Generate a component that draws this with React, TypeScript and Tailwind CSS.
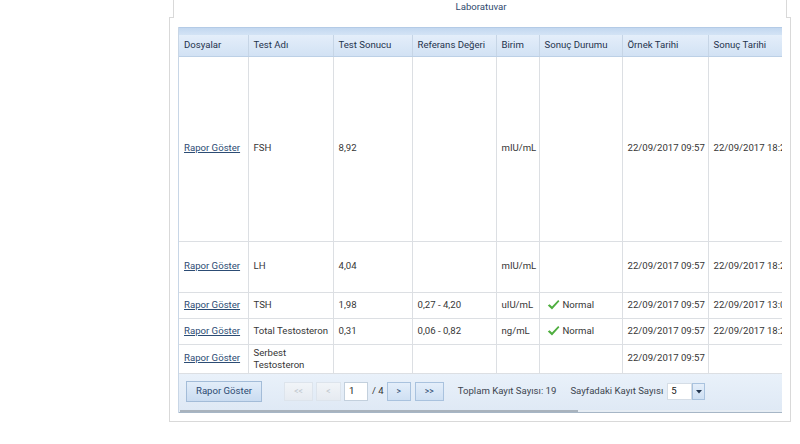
import React from "react";

const cols = [69, 85, 79, 84, 43, 83, 86, 92];
const headers = ["Dosyalar", "Test Adı", "Test Sonucu", "Referans Değeri", "Birim", "Sonuç Durumu", "Örnek Tarihi", "Sonuç Tarihi"];

type Row = { h: number; name: React.ReactNode; val: string; ref: string; unit: string; ok: boolean; o: string; s: string };
const rows: Row[] = [
  { h: 185, name: "FSH", val: "8,92", ref: "", unit: "mIU/mL", ok: false, o: "22/09/2017 09:57", s: "22/09/2017 18:25" },
  { h: 51, name: "LH", val: "4,04", ref: "", unit: "mIU/mL", ok: false, o: "22/09/2017 09:57", s: "22/09/2017 18:25" },
  { h: 26, name: "TSH", val: "1,98", ref: "0,27 - 4,20", unit: "uIU/mL", ok: true, o: "22/09/2017 09:57", s: "22/09/2017 13:05" },
  { h: 26, name: "Total Testosteron", val: "0,31", ref: "0,06 - 0,82", unit: "ng/mL", ok: true, o: "22/09/2017 09:57", s: "22/09/2017 18:25" },
  { h: 29, name: <span className="block leading-[12px]">Serbest<br />Testosteron</span>, val: "", ref: "", unit: "", ok: false, o: "22/09/2017 09:57", s: "" },
];

function Check() {
  return (
    <svg width="13" height="12" viewBox="0 0 13 12" className="shrink-0">
      <path d="M0.8 6.6 L2.6 5.2 L5 7.6 L11.2 1 L12.4 2.2 L5 10.6 Z" fill="#4fae3f" />
    </svg>
  );
}

function NavBtn({ label, enabled, w }: { label: string; enabled: boolean; w: number }) {
  return (
    <div
      style={{ width: w }}
      className={
        "h-[19px] flex items-center justify-center text-[8.5px] border " +
        (enabled
          ? "border-[#a9c2de] bg-gradient-to-b from-[#e4eefa] to-[#cfe0f3] text-[#2b4a72]"
          : "border-[#dde4ec] bg-gradient-to-b from-[#f1f4f8] to-[#e6ebf1] text-[#c0c6cd]")
      }
    >
      {label}
    </div>
  );
}

export default function App() {
  return (
    <div className="w-[800px] h-[444px] bg-white overflow-hidden text-[#363636]" style={{ fontFamily: "Roboto, 'Liberation Sans', sans-serif" }}>
      <div className="ml-[169px] w-[622px]">
        <div className="mx-[4px] h-[17px] border-x border-[#d9d9d9] flex justify-center">
          <span className="text-[9.6px] leading-[12px] text-[#2f4a6e] mt-[1px] ml-[2px]">Laboratuvar</span>
        </div>
        <div className="border-x border-b border-[#d9d9d9] h-[405px]">
          <div className="flex h-0">
            <div className="w-[4px] border-t border-[#d9d9d9]" />
            <div className="flex-1" />
            <div className="w-[4px] border-t border-[#d9d9d9]" />
          </div>
          <div className="pl-[8px] pr-[7px] pt-[10px]">
            <div className="w-[604px] overflow-hidden border-l border-[#c8d6e6]">
              <div className="h-[8px] bg-gradient-to-b from-[#c3d8f0] to-[#d3e3f5] border-t border-[#b4cbe6]" />
              <table className="table-fixed border-collapse text-[9.6px]" style={{ width: cols.reduce((a, b) => a + b, 0) }}>
                <colgroup>
                  {cols.map((c, i) => (
                    <col key={i} style={{ width: c }} />
                  ))}
                </colgroup>
                <thead>
                  <tr className="h-[21px] bg-gradient-to-b from-[#e4eefa] to-[#d2e2f4]">
                    {headers.map((h, i) => (
                      <th
                        key={i}
                        className="text-left font-normal px-[5px] text-[#1f334d] whitespace-nowrap border-b border-[#bcd0e6] border-r border-r-[#c6d5e6]"
                      >
                        {h}
                      </th>
                    ))}
                  </tr>
                </thead>
                <tbody>
                  {rows.map((r, i) => (
                    <tr key={i} style={{ height: r.h }} className="border-b border-[#dcdfe3]">
                      <td className="px-[5px] border-r border-[#dcdfe3]">
                        <span className="underline text-[#2c4c74]">Rapor Göster</span>
                      </td>
                      <td className="px-[5px] border-r border-[#dcdfe3] whitespace-nowrap">{r.name}</td>
                      <td className="px-[5px] border-r border-[#dcdfe3]">{r.val}</td>
                      <td className="px-[5px] border-r border-[#dcdfe3]">{r.ref}</td>
                      <td className="px-[5px] border-r border-[#dcdfe3]">{r.unit}</td>
                      <td className="px-[5px] border-r border-[#dcdfe3]">
                        {r.ok && (
                          <span className="flex items-center gap-[3px] pl-[2px]">
                            <Check />
                            <span>Normal</span>
                          </span>
                        )}
                      </td>
                      <td className="px-[5px] border-r border-[#dcdfe3] whitespace-nowrap">{r.o}</td>
                      <td className="px-[5px] border-r border-[#dcdfe3] whitespace-nowrap">{r.s}</td>
                    </tr>
                  ))}
                </tbody>
              </table>
              <div className="h-[36px] bg-gradient-to-b from-[#e9f1fa] to-[#dfe9f5] flex items-center pl-[7px] text-[9.6px] text-[#3d4650]">
                <div className="w-[76px] h-[21px] border border-[#a3bcd8] bg-gradient-to-b from-[#e2edf9] to-[#cadcf1] flex items-center justify-center text-[#2b4a72]">
                  Rapor Göster
                </div>
                <div className="ml-[22px] flex items-center">
                  <NavBtn label="<<" enabled={false} w={29} />
                  <div className="w-[3px]" />
                  <NavBtn label="<" enabled={false} w={25} />
                  <div className="ml-[3px] w-[24px] h-[19px] bg-white border border-[#c3d0dd] flex items-center pl-[4px] text-[#222]">1</div>
                  <span className="ml-[4px] mr-[3px] text-[#333]">/ 4</span>
                  <NavBtn label=">" enabled={true} w={24} />
                  <div className="w-[4px]" />
                  <NavBtn label=">>" enabled={true} w={29} />
                </div>
                <span className="ml-[14px]">Toplam Kayıt Sayısı: 19</span>
                <span className="ml-[14px]">Sayfadaki Kayıt Sayısı</span>
                <div className="ml-[4px] flex items-center">
                  <div className="w-[25px] h-[17px] bg-white border border-[#d5dde6] flex items-center pl-[3px] text-[#222]">5</div>
                  <div className="w-[13px] h-[17px] border border-[#a9c2de] bg-gradient-to-b from-[#e4eefa] to-[#cfe0f3] flex items-center justify-center">
                    <svg width="6" height="4" viewBox="0 0 6 4"><path d="M0 0 H6 L3 3.5 Z" fill="#23364f" /></svg>
                  </div>
                </div>
              </div>
              <div className="h-[2px] bg-[#e6edf4]">
                <div className="w-[398px] h-[2px] bg-[#a9b3bd] ml-[1px]" />
              </div>
              <div className="h-px bg-[#a6b6c6]" />
            </div>
          </div>
        </div>
      </div>
    </div>
  );
}
